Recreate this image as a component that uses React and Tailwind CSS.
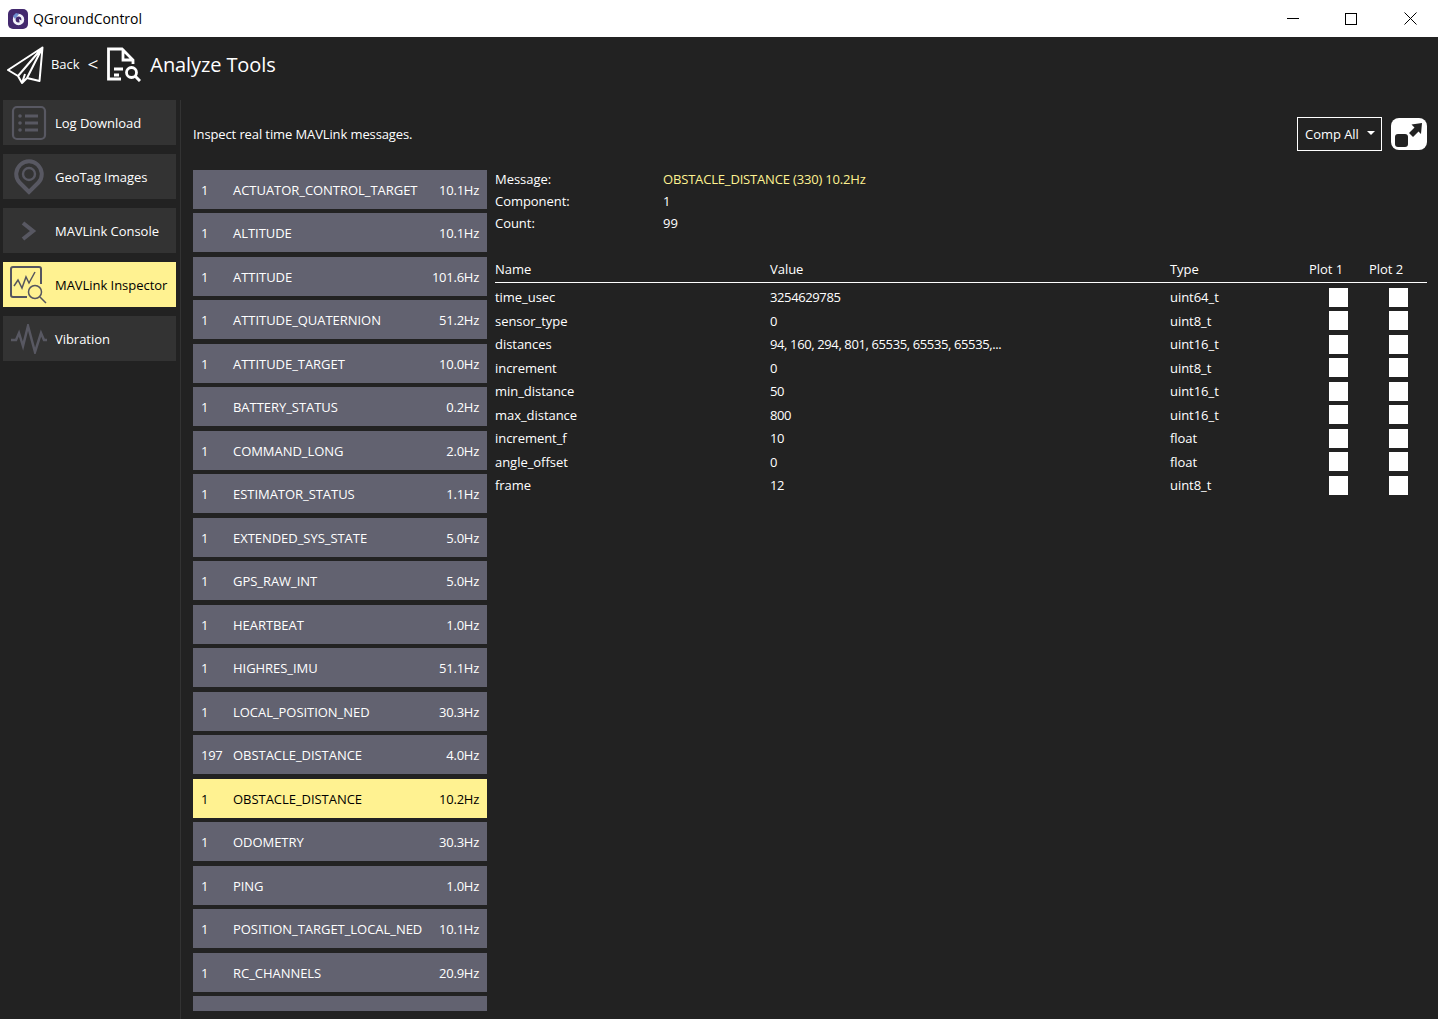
import React from "react";

const font = { fontFamily: '"Open Sans", sans-serif' };

const messages = [
  ["1", "ACTUATOR_CONTROL_TARGET", "10.1Hz"],
  ["1", "ALTITUDE", "10.1Hz"],
  ["1", "ATTITUDE", "101.6Hz"],
  ["1", "ATTITUDE_QUATERNION", "51.2Hz"],
  ["1", "ATTITUDE_TARGET", "10.0Hz"],
  ["1", "BATTERY_STATUS", "0.2Hz"],
  ["1", "COMMAND_LONG", "2.0Hz"],
  ["1", "ESTIMATOR_STATUS", "1.1Hz"],
  ["1", "EXTENDED_SYS_STATE", "5.0Hz"],
  ["1", "GPS_RAW_INT", "5.0Hz"],
  ["1", "HEARTBEAT", "1.0Hz"],
  ["1", "HIGHRES_IMU", "51.1Hz"],
  ["1", "LOCAL_POSITION_NED", "30.3Hz"],
  ["197", "OBSTACLE_DISTANCE", "4.0Hz"],
  ["1", "OBSTACLE_DISTANCE", "10.2Hz", true],
  ["1", "ODOMETRY", "30.3Hz"],
  ["1", "PING", "1.0Hz"],
  ["1", "POSITION_TARGET_LOCAL_NED", "10.1Hz"],
  ["1", "RC_CHANNELS", "20.9Hz"],
  ["", "", ""],
];

const fields = [
  ["time_usec", "3254629785", "uint64_t"],
  ["sensor_type", "0", "uint8_t"],
  ["distances", "94, 160, 294, 801, 65535, 65535, 65535,...", "uint16_t"],
  ["increment", "0", "uint8_t"],
  ["min_distance", "50", "uint16_t"],
  ["max_distance", "800", "uint16_t"],
  ["increment_f", "10", "float"],
  ["angle_offset", "0", "float"],
  ["frame", "12", "uint8_t"],
];

const ListIcon = () => (
  <svg width="36" height="36" viewBox="0 0 36 36" fill="none" stroke="#585862" strokeWidth="2.2">
    <rect x="2" y="2" width="32" height="32" rx="4" />
    <path d="M14 11h13M14 18h13M14 25h13" strokeWidth="3" />
    <circle cx="9" cy="11" r="1.8" fill="#585862" stroke="none" />
    <circle cx="9" cy="18" r="1.8" fill="#585862" stroke="none" />
    <circle cx="9" cy="25" r="1.8" fill="#585862" stroke="none" />
  </svg>
);

const PinIcon = () => (
  <svg width="30" height="36" viewBox="0 0 30 36" fill="none" stroke="#585862">
    <path d="M15 33 5.5 23.5C2.5 20.5 2 17.5 2.3 14 3 7.5 8.5 2.2 15 2.2S27 7.5 27.7 14c.3 3.5-.2 6.500-3.200 9.500z" strokeWidth="4" />
    <circle cx="15" cy="15" r="6" strokeWidth="2.4" />
  </svg>
);

const ChevronIcon = () => (
  <svg width="16" height="20" viewBox="0 0 16 20" fill="none" stroke="#585862" strokeWidth="4">
    <path d="M2 2l10 8-10 8" />
  </svg>
);

const ChartIcon = () => (
  <svg width="38" height="38" viewBox="0 0 38 38" fill="none" stroke="#55555f" strokeWidth="1.5">
    <path d="M17 31H3a2 2 0 0 1-2-2V3a2 2 0 0 1 2-2h26a2 2 0 0 1 2 2v15" strokeWidth="2" />
    <path d="M4 20l4-6 4 8 4-11 3 6 6-11" />
    <circle cx="25" cy="26" r="6.500" />
    <path d="M30 31l6 6" />
  </svg>
);

const WaveIcon = () => (
  <svg width="36" height="30" viewBox="0 0 36 30" fill="none" stroke="#585862" strokeWidth="2.500">
    <path d="M0 16H5L8 9 12 22 17 2 24 28 30 9 33 16H36" />
  </svg>
);

const navItems = [
  { label: "Log Download", icon: <ListIcon /> },
  { label: "GeoTag Images", icon: <PinIcon /> },
  { label: "MAVLink Console", icon: <ChevronIcon /> },
  { label: "MAVLink Inspector", icon: <ChartIcon />, active: true },
  { label: "Vibration", icon: <WaveIcon /> },
];

export default function App() {
  return (
    <div className="w-[1438px] h-[1019px] overflow-hidden flex flex-col bg-[#222222] text-white text-[13px] tracking-[-0.04px]" style={font}>
      <div className="h-[37px] bg-white text-black flex items-center shrink-0">
        <svg className="ml-[8px]" width="20" height="20" viewBox="0 0 20 20">
          <rect width="20" height="20" rx="5" fill="#43296e" />
          <circle cx="10.500" cy="10.500" r="4.300" fill="none" stroke="#f2f2fa" strokeWidth="2.800" />
          <path d="M5 7l3-3 3 1-4 5z" fill="#6f8fd0" />
          <path d="M11 10l4.500 3-3.500 2z" fill="#f2f2fa" />
        </svg>
        <span className="ml-[5px] text-[14px]">QGroundControl</span>
        <div className="ml-auto flex items-center">
          <div className="w-[54px] h-[37px] flex items-center justify-center">
            <div className="w-[12px] h-px bg-black" />
          </div>
          <div className="w-[62px] h-[37px] flex items-center justify-center">
            <div className="w-[12px] h-[12px] border border-black" />
          </div>
          <div className="w-[56px] h-[37px] flex items-center justify-center">
            <svg width="13" height="13" viewBox="0 0 13 13" stroke="#000" fill="none"><path d="M.5.5l12 12M12.500.5l-12 12" /></svg>
          </div>
        </div>
      </div>

      <div className="h-[63px] shrink-0 flex items-center pl-[6px] pb-[8px]">
        <svg width="38" height="38" viewBox="0 0 38 38" fill="none" stroke="#fff" strokeWidth="2" strokeLinejoin="round">
          <path d="M36.500 1.500 2 24l10 6 4 7 5-5 12.500 3zM36.500 1.500 12 30M36.500 1.500 21 32M16 37l3-9" />
        </svg>
        <span className="ml-[7px]">Back</span>
        <span className="ml-[8px] text-[19px] leading-none">&lt;</span>
        <svg className="ml-[8px]" width="35" height="35" viewBox="0 0 35 35" fill="none" stroke="#fff" strokeWidth="2.800">
          <path d="M15 32H2.500V2H16L27 13v4M17 2v11h10" />
          <path d="M8 22h9M8 28h5" />
          <circle cx="25.500" cy="25.500" r="5" />
          <path d="M29 29l5 5" strokeWidth="3" />
        </svg>
        <span className="ml-[9px] text-[20px] leading-none tracking-[-0.1px]">Analyze Tools</span>
      </div>

      <div className="flex-1 flex min-h-0">
        <div className="w-[181px] shrink-0 border-r border-[#333333] pl-[3px] pr-[4px] flex flex-col gap-[9px]">
          {navItems.map((n) => (
            <div key={n.label} className={`h-[45px] flex items-center ${n.active ? "bg-[#fff291] text-black" : "bg-[#333333] text-white"}`}>
              <div className="w-[52px] shrink-0 flex items-center justify-center">{n.icon}</div>
              <span className="mt-[2px]">{n.label}</span>
            </div>
          ))}
        </div>

        <div className="flex-1 min-w-0 pl-[12px] pr-[11px] flex flex-col">
          <div className="h-[70px] shrink-0 flex items-center pb-[2px]">
            <span className="mt-[2px] tracking-[-0.11px]">Inspect real time MAVLink messages.</span>
            <div className="ml-auto flex items-center gap-[9px]">
              <div className="w-[85px] h-[34px] border border-white flex items-center pl-[7px]">
                <span className="mt-[2px]">Comp All</span>
                <div className="ml-[8px] w-0 h-0 border-x-[4px] border-x-transparent border-t-[4px] border-t-white mb-[2px]" />
              </div>
              <div className="w-[36px] h-[32px] bg-white rounded-[8px]">
                <svg width="36" height="32" viewBox="0 0 36 32" fill="#222222">
                  <rect x="4" y="16" width="13" height="13" rx="3" />
                  <path d="M31 5 20.500 6.500 23.500 9.500 18 15 22 19 27.500 13.500 30 16z" />
                </svg>
              </div>
            </div>
          </div>

          <div className="flex-1 min-h-0 flex gap-[8px]">
            <div className="w-[294px] h-[841px] mt-[-0.25px] overflow-hidden shrink-0 flex flex-col gap-[4.5px]">
              {messages.map(([comp, name, hz, active], i) => (
                <div key={i} className={`h-[39px] shrink-0 flex items-center px-[8px] pt-[2px] ${active ? "bg-[#fff291] text-black" : "bg-[#626270] text-white"}`}>
                  <span className="w-[32px] shrink-0 tracking-[-0.3px]">{comp}</span>
                  <span>{name}</span>
                  <span className="ml-auto tracking-[-0.25px]">{hz}</span>
                </div>
              ))}
            </div>

            <div className="flex-1 min-w-0">
              <div className="grid grid-cols-[168px_1fr] auto-rows-[22px] items-center h-[66px] mt-[-1px]">
                <span>Message:</span>
                <span className="text-[#fff291] tracking-[-0.17px]">OBSTACLE_DISTANCE (330) 10.2Hz</span>
                <span>Component:</span>
                <span>1</span>
                <span>Count:</span>
                <span>99</span>
              </div>
              <div className="grid grid-cols-[275px_400px_139px_60px_1fr] h-[31px] mt-[17px] items-center border-b border-white pt-[6px]">
                <span>Name</span>
                <span>Value</span>
                <span>Type</span>
                <span>Plot 1</span>
                <span>Plot 2</span>
              </div>
              <div className="mt-[4.75px] flex flex-col gap-[4.5px]">
                {fields.map(([name, value, type]) => (
                  <div key={name} className="grid grid-cols-[275px_400px_159px_60px_19px] grid-rows-[19px] h-[19px] items-center">
                    <span className="pt-[1px]">{name}</span>
                    <span className="pt-[1px] tracking-[-0.38px]">{value}</span>
                    <span className="pt-[1px]">{type}</span>
                    <div className="w-[19px] h-[19px] bg-white" />
                    <div className="w-[19px] h-[19px] bg-white" />
                  </div>
                ))}
              </div>
            </div>
          </div>
        </div>
      </div>
    </div>
  );
}
